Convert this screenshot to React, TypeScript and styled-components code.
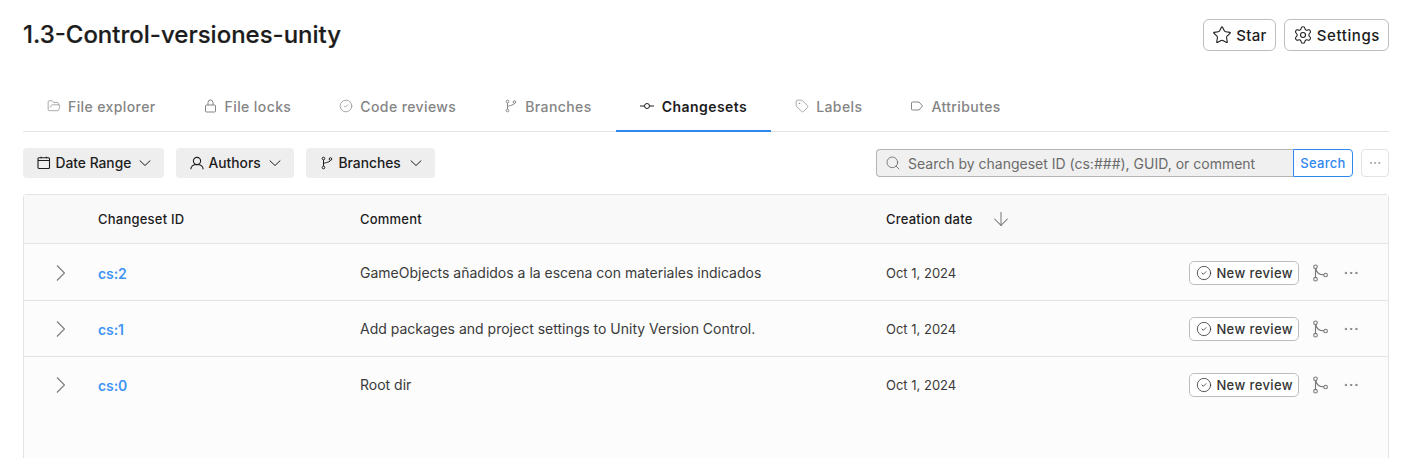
import React from 'react';
import styled, { createGlobalStyle } from 'styled-components';
import {
  ArrowDown,
  CircleCheck,
  Ellipsis,
  FolderOpen,
  Search as SearchGlyph,
  Settings as SettingsGlyph,
  Star as StarGlyph,
  Tag,
} from 'lucide-react';

const GlobalStyle = createGlobalStyle`
  html, body {
    margin: 0;
    padding: 0;
    height: 458px;
    overflow: hidden;
    background: #fff;
    font-family: Inter, "Liberation Sans", sans-serif;
    color: #1b1b1b;
  }
`;

const Page = styled.div`
  display: flex;
  flex-direction: column;
  padding: 19px 23px 0;
  height: 439px;
  overflow: hidden;
`;

const TopBar = styled.header`
  display: flex;
  justify-content: space-between;
  align-items: flex-start;
  height: 57px;
`;

const Title = styled.h1`
  margin: 0;
  font-size: 24px;
  line-height: 32px;
  font-weight: 500;
  color: #1c1c1c;
  -webkit-text-stroke: 0.2px #1c1c1c;
`;

const TopActions = styled.div`
  display: flex;
  gap: 8px;
`;

const OutlineButton = styled.button<{ $spacing: number }>`
  display: flex;
  align-items: center;
  gap: 4px;
  height: 32px;
  padding: 0 8px;
  background: #fff;
  border: 1px solid #bdbdbd;
  border-radius: 6px;
  font: 500 15px Inter, sans-serif;
  letter-spacing: ${(p) => p.$spacing}px;
  color: #1c1c1c;
`;

const Tabs = styled.nav`
  display: flex;
  height: 55px;
  border-bottom: 1px solid #e3e3e3;
`;

const Tab = styled.div<{ $active?: boolean }>`
  display: flex;
  align-items: center;
  gap: ${(p) => (p.$active ? '8px' : '7px')};
  padding: 6px 24px 0;
  margin-bottom: -1px;
  font-size: 14px;
  letter-spacing: ${(p) => (p.$active ? '0.45px' : '0.4px')};
  font-weight: ${(p) => (p.$active ? 600 : 500)};
  color: ${(p) => (p.$active ? '#1c1c1c' : '#858585')};
  border-bottom: 2px solid ${(p) => (p.$active ? '#2f87f0' : 'transparent')};
`;

const FilterBar = styled.div`
  display: flex;
  align-items: center;
  justify-content: space-between;
  height: 62px;
`;

const Filters = styled.div`
  display: flex;
  gap: 12px;
`;

const FilterButton = styled.button<{ $width: number }>`
  display: flex;
  align-items: center;
  gap: 4.5px;
  box-sizing: border-box;
  width: ${(p) => p.$width}px;
  height: 30px;
  padding: 0 13px 0 14px;
  background: #eeeeee;
  border: none;
  border-radius: 4px;
  font: 500 13.8px Inter, sans-serif;
  color: #1c1c1c;
`;

const FilterChevron = styled.svg`
  margin-left: auto;
`;

const SearchArea = styled.div`
  display: flex;
  align-items: center;
`;

const SearchField = styled.div`
  display: flex;
  align-items: center;
  gap: 7px;
  box-sizing: border-box;
  width: 417px;
  height: 28px;
  padding: 0 7px 0 8px;
  background: #f0f0f0;
  border: 1px solid #b4b4b4;
  border-right: none;
  border-radius: 4px 0 0 4px;
  font-size: 14px;
  color: #6b6b6b;
`;

const SearchButton = styled.button`
  box-sizing: border-box;
  width: 60px;
  height: 28px;
  padding: 0;
  background: #fff;
  border: 1px solid #2f87f0;
  border-radius: 0 4px 4px 0;
  font: 500 13px Inter, sans-serif;
  letter-spacing: 0.3px;
  color: #2f87f0;
`;

const MoreButton = styled.button`
  display: flex;
  align-items: center;
  justify-content: center;
  box-sizing: border-box;
  width: 28px;
  height: 28px;
  margin-left: 8px;
  padding: 0;
  background: #fff;
  border: 1px solid #e3e3e3;
  border-radius: 4px;
  color: #8a8a8a;
`;

const Table = styled.section`
  flex: 1;
  background: #fcfcfc;
  border: 1px solid #e3e3e3;
  border-bottom: none;
  border-radius: 4px 4px 0 0;
`;

const HeadRow = styled.div`
  display: grid;
  grid-template-columns: 74px 262px 526px 1fr;
  align-items: center;
  height: 48px;
  background: #f9f9f9;
  border-bottom: 1px solid #e3e3e3;
`;

const Row = styled.div<{ $lead?: boolean }>`
  display: grid;
  grid-template-columns: 74px 262px 526px 1fr;
  align-items: center;
  height: 54px;
  padding-top: ${(p) => (p.$lead ? '2px' : '1px')};
  border-bottom: 1px solid #e3e3e3;
  &:last-child {
    border-bottom: none;
  }
`;

const HeadCell = styled.div`
  display: flex;
  align-items: center;
  gap: 17px;
  font-size: 13px;
  letter-spacing: 0.22px;
  font-weight: 500;
  color: #1c1c1c;
`;

const ExpandCell = styled.div`
  display: flex;
  justify-content: center;
  padding-right: 1px;
  color: #777;
`;

const ChangesetLink = styled.a`
  font-size: 14px;
  font-weight: 600;
  letter-spacing: -0.1px;
  color: #3f94f2;
`;

const Comment = styled.div`
  margin-bottom: 2px;
  font-size: 14px;
  color: #3a3a3a;
`;

const DateCell = styled.div`
  display: flex;
  align-items: center;
  justify-content: space-between;
  padding-right: 28px;
  font-size: 13px;
  color: #3a3a3a;
`;

const RowActions = styled.div`
  display: flex;
  align-items: center;
  color: #777;
`;

const ReviewButton = styled.button`
  display: flex;
  align-items: center;
  gap: 4px;
  box-sizing: border-box;
  height: 24px;
  margin-right: 12px;
  padding: 0 5px 0 6px;
  background: #fff;
  border: 1px solid #bdbdbd;
  border-radius: 5px;
  font: 500 13px Inter, sans-serif;
  letter-spacing: 0.4px;
  color: #333;
`;

const IconButton = styled.span`
  display: flex;
  margin-right: 13px;
  &:last-child {
    margin-right: 0;
  }
`;

const BranchIcon = () => (
  <svg width="14" height="14" viewBox="0 0 14 14" fill="none" stroke="currentColor" strokeWidth="1">
    <circle cx="3.500" cy="2.500" r="1.300" />
    <circle cx="3.500" cy="11.500" r="1.300" />
    <circle cx="10.500" cy="3" r="1.300" />
    <path d="M3.500 4v6M3.500 8.500c0-2.500 6-1.500 7-4.200" />
  </svg>
);

const LockIcon = () => (
  <svg width="14" height="14" viewBox="0 0 14 14" fill="none" stroke="currentColor" strokeWidth="1">
    <rect x="1.500" y="6" width="10" height="7" rx="1" />
    <path d="M4 6V3.500a2.500 2.500 0 0 1 5 0V6" />
  </svg>
);

const AttributeIcon = () => (
  <svg width="14" height="14" viewBox="0 0 14 14" fill="none" stroke="currentColor" strokeWidth="1">
    <path d="M2.500 3h6.500l3.500 4-3.500 4H2.500a1 1 0 0 1-1-1V4a1 1 0 0 1 1-1z" />
  </svg>
);

const CommitIcon = () => (
  <svg width="14" height="14" viewBox="0 0 14 14" fill="none" stroke="currentColor" strokeWidth="1">
    <circle cx="7" cy="7" r="2.500" />
    <path d="M0 7h4.500M9.500 7H14" />
  </svg>
);

const CalendarIcon = () => (
  <svg width="14" height="14" viewBox="0 0 14 14" fill="none" stroke="currentColor" strokeWidth="1.100">
    <rect x="1" y="1.800" width="11.500" height="10.700" rx="1" />
    <path d="M1 4.500h11.500M4 .8v1.500M9.500 .8v1.500" />
  </svg>
);

const UserIcon = () => (
  <svg width="14" height="14" viewBox="0 0 14 14" fill="none" stroke="currentColor" strokeWidth="1.100">
    <circle cx="7" cy="5" r="3.600" />
    <path d="M.8 13.200c.3-2.900 2.600-4.700 6.200-4.700s5.900 1.800 6.200 4.700" />
  </svg>
);

const ChevronDownIcon = () => (
  <FilterChevron width="12" height="12" viewBox="0 0 12 12" fill="none" stroke="currentColor" strokeWidth="1">
    <path d="M.7 3.500 6 8.500l5.300-5" />
  </FilterChevron>
);

const ChevronRightIcon = () => (
  <svg width="9" height="18" viewBox="0 0 9 18" fill="none" stroke="currentColor" strokeWidth="1.100">
    <path d="M1 1.500 8.500 9 1 16.500" />
  </svg>
);

const ReviewForkIcon = () => (
  <svg width="18" height="18" viewBox="0 0 18 18" fill="none" stroke="currentColor" strokeWidth="1.100">
    <circle cx="4.500" cy="2.800" r="1.800" />
    <circle cx="4.500" cy="15.200" r="1.800" />
    <circle cx="14.600" cy="11" r="1.800" />
    <path d="M4.500 4.600v8.800M4.800 4.600c.7 3.600 3.400 6.200 8 6.300" />
  </svg>
);

const changesets = [
  { id: 'cs:2', comment: 'GameObjects añadidos a la escena con materiales indicados' },
  { id: 'cs:1', comment: 'Add packages and project settings to Unity Version Control.' },
  { id: 'cs:0', comment: 'Root dir' },
];

const App: React.FC = () => {
  return (
    <Page>
      <GlobalStyle />
      <TopBar>
        <Title>1.3-Control-versiones-unity</Title>
        <TopActions>
          <OutlineButton $spacing={0.35}>
            <StarGlyph size={20} strokeWidth={1.3} />
            Star
          </OutlineButton>
          <OutlineButton $spacing={0.6}>
            <SettingsGlyph size={20} strokeWidth={1.3} />
            Settings
          </OutlineButton>
        </TopActions>
      </TopBar>

      <Tabs>
        <Tab><FolderOpen size={14} strokeWidth={1.2} />File explorer</Tab>
        <Tab><LockIcon />File locks</Tab>
        <Tab><CircleCheck size={14} strokeWidth={1.2} />Code reviews</Tab>
        <Tab><BranchIcon />Branches</Tab>
        <Tab $active><CommitIcon />Changesets</Tab>
        <Tab><Tag size={14} strokeWidth={1.2} />Labels</Tab>
        <Tab><AttributeIcon />Attributes</Tab>
      </Tabs>

      <FilterBar>
        <Filters>
          <FilterButton $width={141}><CalendarIcon />Date Range<ChevronDownIcon /></FilterButton>
          <FilterButton $width={118}><UserIcon />Authors<ChevronDownIcon /></FilterButton>
          <FilterButton $width={129}><BranchIcon />Branches<ChevronDownIcon /></FilterButton>
        </Filters>
        <SearchArea>
          <SearchField>
            <SearchGlyph size={16} strokeWidth={1.3} />
            Search by changeset ID (cs:###), GUID, or comment
          </SearchField>
          <SearchButton>Search</SearchButton>
          <MoreButton><Ellipsis size={14} strokeWidth={1.2} /></MoreButton>
        </SearchArea>
      </FilterBar>

      <Table>
        <HeadRow>
          <div />
          <HeadCell>Changeset ID</HeadCell>
          <HeadCell>Comment</HeadCell>
          <HeadCell>Creation date<ArrowDown size={22} strokeWidth={1.1} color="#777" /></HeadCell>
        </HeadRow>
        {changesets.map((cs, i) => (
          <Row key={cs.id} $lead={i === 0}>
            <ExpandCell><ChevronRightIcon /></ExpandCell>
            <ChangesetLink>{cs.id}</ChangesetLink>
            <Comment>{cs.comment}</Comment>
            <DateCell>
              Oct 1, 2024
              <RowActions>
                <ReviewButton><CircleCheck size={16} strokeWidth={1.2} />New review</ReviewButton>
                <IconButton><ReviewForkIcon /></IconButton>
                <IconButton><Ellipsis size={18} strokeWidth={1.2} /></IconButton>
              </RowActions>
            </DateCell>
          </Row>
        ))}
      </Table>
    </Page>
  );
};

export default App;
